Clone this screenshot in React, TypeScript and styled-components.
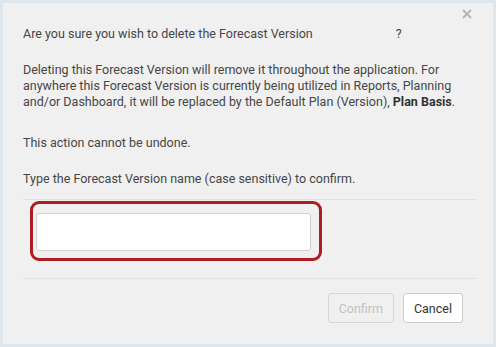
import styled, { createGlobalStyle } from "styled-components";

const Global = createGlobalStyle`
  html, body {
    margin: 0;
    padding: 0;
    background: #dde5ed;
  }
  body {
    font-family: Roboto, "Liberation Sans", Arial, sans-serif;
  }
`;

function DeleteVersionDialog() {
  return (
    <Page>
      <Dialog>
        <Close aria-label="close">
          <svg width="10" height="10" viewBox="0 0 10 10">
            <path d="M1 1 L9 9 M9 1 L1 9" stroke="#b5b5b5" strokeWidth="2" />
          </svg>
        </Close>
        <Body>
          <Text $gap={20}>
            Are you sure you wish to delete the Forecast Version
            <Name />?
          </Text>
          <Text $gap={25}>
            Deleting this Forecast Version will remove it throughout the
            application. For anywhere this Forecast Version is currently being
            utilized in Reports, Planning and/or Dashboard, it will be replaced
            by the Default Plan (Version), <b>Plan Basis</b>.
          </Text>
          <Text $gap={20}>This action cannot be undone.</Text>
          <Text>Type the Forecast Version name (case sensitive) to confirm.</Text>
        </Body>
        <Divider $top={12} />
        <Highlight>
          <NameInput type="text" />
        </Highlight>
        <Divider $top={17} />
        <Footer>
          <Btn disabled>Confirm</Btn>
          <Btn>Cancel</Btn>
        </Footer>
      </Dialog>
    </Page>
  );
}

const Page = styled.div`
  padding: 3px;
`;

const Dialog = styled.div`
  position: relative;
  width: 490px;
  height: 341px;
  background: #f0f0f0;
  box-sizing: border-box;
`;

const Close = styled.button`
  position: absolute;
  top: 6px;
  right: 21px;
  border: 0;
  padding: 0;
  background: none;
  display: flex;
`;

const Body = styled.div`
  padding: 23px 12px 0 20px;
`;

const Text = styled.p<{ $gap?: number }>`
  margin: 0 0 ${(p) => p.$gap ?? 0}px 0;
  font-size: 12.5px;
  line-height: 16px;
  color: #464646;
  b {
    color: #333;
    font-weight: 700;
  }
`;

const Name = styled.span`
  display: inline-block;
  width: 83px;
`;

const Divider = styled.hr<{ $top: number }>`
  margin: ${(p) => p.$top}px 16px 0 20px;
  border: 0;
  height: 1px;
  background: #e2e2e2;
`;

const Highlight = styled.div`
  margin: 1px 0 0 27px;
  width: 292px;
  height: 60px;
  box-sizing: border-box;
  border: 3px solid #b01c23;
  border-radius: 9px;
  padding: 9px 8px 7px 3px;
`;

const NameInput = styled.input`
  display: block;
  width: 100%;
  height: 100%;
  box-sizing: border-box;
  border: 1px solid #cfcfcf;
  border-radius: 3px;
  background: #fff;
  outline: none;
`;

const Footer = styled.div`
  display: flex;
  justify-content: flex-end;
  gap: 9px;
  padding: 14px 30px 0 0;
`;

const Btn = styled.button`
  height: 30px;
  padding: 0 10px;
  font-family: Roboto, "Liberation Sans", Arial, sans-serif;
  font-size: 12.5px;
  border: 1px solid #cccccc;
  border-radius: 3px;
  background: #fff;
  color: #333;
  &:disabled {
    background: #f0f0f0;
    color: #c2c2c2;
    border-color: #d6d6d6;
  }
`;

export default function App() {
  return (
    <>
      <Global />
      <DeleteVersionDialog />
    </>
  );
}
